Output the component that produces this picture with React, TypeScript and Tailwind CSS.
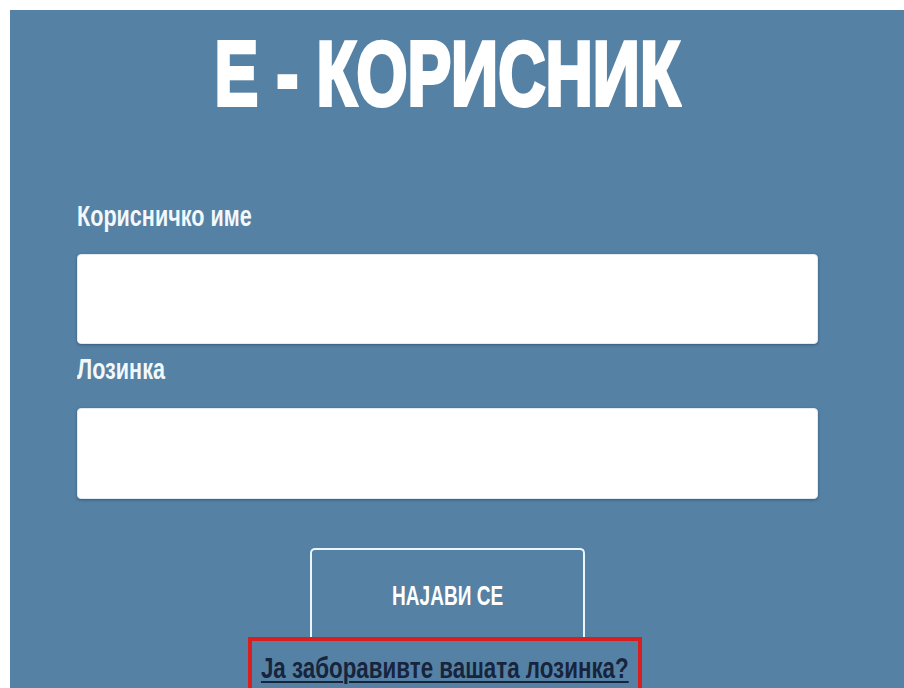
import React from "react";

// Login panel for the "Е - КОРИСНИК" portal.
export default function App() {
  const sans = "font-['Liberation_Sans',Arial,sans-serif]";
  return (
    <div className={`w-full h-[688px] bg-white pl-[10px] pt-[10px] overflow-hidden ${sans}`}>
      <div className="h-[678px] w-full bg-[#5582a4] overflow-hidden">
        <div className="ml-[67px] w-[741px] flex flex-col items-start pt-[18px]">
          {/* heading */}
          <h1 className="w-full flex justify-center text-[91px] leading-none font-bold text-white whitespace-nowrap">
            <span className="inline-block origin-center scale-x-[0.72] [-webkit-text-stroke:4px_#fff]">
              Е - КОРИСНИК
            </span>
          </h1>

          {/* username */}
          <label className="mt-[82px] text-[30px] leading-none font-bold text-[#f2f8fc] whitespace-nowrap">
            <span className="inline-block origin-left scale-x-[0.72]">Корисничко име</span>
          </label>
          <input
            type="text"
            className="mt-[23px] h-[90px] w-full rounded-[4px] bg-white border border-[#e3ebf2] shadow-[0_1px_3px_rgba(20,40,70,0.45)] outline-none"
          />

          {/* password */}
          <label className="mt-[10px] text-[30px] leading-none font-bold text-[#f2f8fc] whitespace-nowrap">
            <span className="inline-block origin-left scale-x-[0.72]">Лозинка</span>
          </label>
          <input
            type="password"
            className="mt-[24px] h-[91px] w-full rounded-[4px] bg-white border border-[#e3ebf2] shadow-[0_1px_3px_rgba(20,40,70,0.45)] outline-none"
          />

          {/* submit */}
          <button
            type="button"
            className="ml-[233px] mt-[49px] h-[89px] w-[275px] rounded-t-[5px] border-2 border-b-0 border-[#eaf5fc] pt-[32px] flex justify-center items-start text-[28px] leading-none font-bold text-white whitespace-nowrap"
          >
            <span className="inline-block origin-center scale-x-[0.68]">НАЈАВИ СЕ</span>
          </button>

          {/* forgotten password */}
          <div className="ml-[171px] h-[60px] w-[394px] border-4 border-[#d81e1e] pt-[12px] flex justify-center items-start whitespace-nowrap">
            <a
              href="#"
              className="inline-block shrink-0 origin-center scale-x-[0.745] text-[30px] leading-none font-bold text-[#17243d] underline decoration-2 underline-offset-[3px]"
            >
              Ја заборавивте вашата лозинка?
            </a>
          </div>
        </div>
      </div>
    </div>
  );
}
